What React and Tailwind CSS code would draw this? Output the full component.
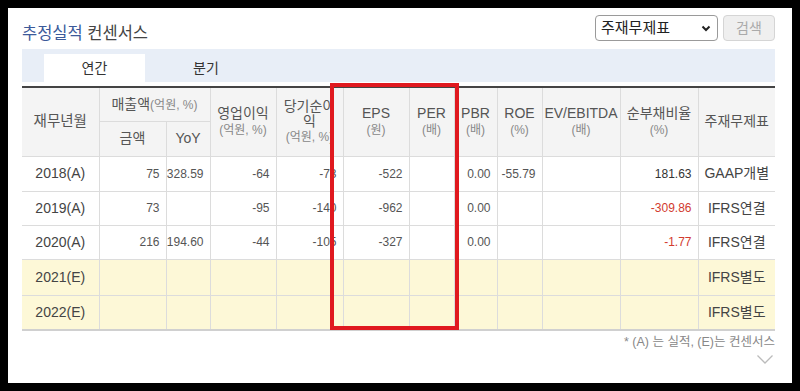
import React from 'react';

const font = { fontFamily: '"Liberation Sans", "Noto Sans CJK KR", sans-serif' };

const rows = [
  { year: '2018(A)', est: false, amt: '75', yoy: '328.59', op: '-64', net: '-73', eps: '-522', per: '', pbr: '0.00', roe: '-55.79', ev: '', debt: '181.63', neg: false, fs: 'GAAP개별' },
  { year: '2019(A)', est: false, amt: '73', yoy: '', op: '-95', net: '-140', eps: '-962', per: '', pbr: '0.00', roe: '', ev: '', debt: '-309.86', neg: true, fs: 'IFRS연결' },
  { year: '2020(A)', est: false, amt: '216', yoy: '194.60', op: '-44', net: '-105', eps: '-327', per: '', pbr: '0.00', roe: '', ev: '', debt: '-1.77', neg: true, fs: 'IFRS연결' },
  { year: '2021(E)', est: true, amt: '', yoy: '', op: '', net: '', eps: '', per: '', pbr: '', roe: '', ev: '', debt: '', neg: false, fs: 'IFRS별도' },
  { year: '2022(E)', est: true, amt: '', yoy: '', op: '', net: '', eps: '', per: '', pbr: '', roe: '', ev: '', debt: '', neg: false, fs: 'IFRS별도' },
];

const widths = [77, 67, 44, 66, 67, 66, 45, 43, 45, 78, 78, 77];

// header cell with a unit line underneath
const HeadCell = ({ title, unit, last }) => (
  <th
    rowSpan={2}
    className={`font-normal border-b border-[#dcdcdc] ${last ? '' : 'border-r'} bg-[#f4f4f4] align-middle text-center`}
  >
    <div className="text-[14px] leading-[17px] text-[#555]">{title}</div>
    {unit && <div className="text-[12px] leading-[16px] text-[#888]">{unit}</div>}
  </th>
);

const num = 'border-r border-b border-[#dcdcdc] text-right pr-[6px] text-[12px] text-[#555]';

export default function App() {
  return (
    <div className="w-[800px] h-[391px] bg-black pt-[8px] pl-[8px]" style={font}>
      <div className="w-[784px] h-[375px] bg-white pl-[14px] pr-[17px] pt-[7px]">
        <div className="relative">
          {/* title + selector */}
          <div className="flex items-start justify-between h-[26px]">
            <div className="mt-[7px] text-[16.5px] leading-[22px]">
              <span className="text-[#3c5a9a]">추정실적</span>{' '}
              <span className="text-[#444]">컨센서스</span>
            </div>
            <div className="flex">
              <div className="w-[123px] h-[26px] border border-[#9a9a9a] rounded-[4px] flex items-center justify-between pl-[5px] pr-[6px] text-[15px] text-[#222]">
                <span>주재무제표</span>
                <svg width="10" height="7" viewBox="0 0 10 7">
                  <polyline points="1.5,1.5 5,5 8.5,1.5" fill="none" stroke="#222" strokeWidth="2" />
                </svg>
              </div>
              <div className="w-[52px] h-[26px] ml-[5px] border border-[#d5d5d5] rounded-[4px] bg-[#efefef] flex items-center justify-center text-[14px] text-[#aaa]">
                검색
              </div>
            </div>
          </div>

          {/* tabs */}
          <div className="mt-[8px] h-[33px] bg-[#e8eef7] pl-[22px] pt-[5px] flex">
            <div className="w-[101px] h-[28px] bg-white flex items-center justify-center text-[14px] text-[#333]">연간</div>
            <div className="w-[122px] h-[28px] flex items-center justify-center text-[14px] text-[#333]">분기</div>
          </div>

          {/* table */}
          <table className="mt-[4px] w-full table-fixed border-collapse border-t-2 border-t-[#444] border-b-2 border-b-[#d0d0d0]">
            <colgroup>
              {widths.map((w, i) => (
                <col key={i} style={{ width: w }} />
              ))}
            </colgroup>
            <thead>
              <tr className="h-[34px]">
                <th rowSpan={2} className="font-normal border-r border-b border-[#dcdcdc] bg-[#f4f4f4] text-[14.5px] text-[#555]">
                  재무년월
                </th>
                <th colSpan={2} className="font-normal border-r border-b border-[#dcdcdc] bg-[#f4f4f4] text-[14px] text-[#555]">
                  매출액<span className="text-[12px] text-[#888]">(억원, %)</span>
                </th>
                <HeadCell title="영업이익" unit="(억원, %)" />
                <th rowSpan={2} className="font-normal border-r border-b border-[#dcdcdc] bg-[#f4f4f4] text-center">
                  <div className="text-[14px] leading-[15px] text-[#555]">
                    당기순이
                    <br />익
                  </div>
                  <div className="text-[12px] leading-[16px] text-[#888]">(억원, %)</div>
                </th>
                <HeadCell title="EPS" unit="(원)" />
                <HeadCell title="PER" unit="(배)" />
                <HeadCell title="PBR" unit="(배)" />
                <HeadCell title="ROE" unit="(%)" />
                <HeadCell title="EV/EBITDA" unit="(배)" />
                <HeadCell title="순부채비율" unit="(%)" />
                <HeadCell title="주재무제표" last />
              </tr>
              <tr className="h-[35px]">
                <th className="font-normal border-r border-b border-[#dcdcdc] bg-[#f4f4f4] text-[14px] text-[#555]">금액</th>
                <th className="font-normal border-r border-b border-[#dcdcdc] bg-[#f4f4f4] text-[14px] text-[#555]">YoY</th>
              </tr>
            </thead>
            <tbody>
              {rows.map((r, i) => (
                <tr key={r.year} className={`${i === 3 ? 'h-[36px]' : i === 0 || i === 4 ? 'h-[35px]' : 'h-[34px]'} ${r.est ? 'bg-[#fdf8d7]' : 'bg-white'}`}>
                  <td className="border-r border-b border-[#dcdcdc] text-center text-[14px] text-[#444]">{r.year}</td>
                  <td className={num}>{r.amt}</td>
                  <td className={num}>{r.yoy}</td>
                  <td className={num}>{r.op}</td>
                  <td className={num}>{r.net}</td>
                  <td className={num}>{r.eps}</td>
                  <td className={num}>{r.per}</td>
                  <td className={num}>{r.pbr}</td>
                  <td className={num}>{r.roe}</td>
                  <td className={num}>{r.ev}</td>
                  <td className={`border-r border-b border-[#dcdcdc] text-right pr-[6px] text-[12px] ${r.neg ? 'text-[#d23b2f]' : 'text-[#333]'}`}>
                    {r.debt}
                  </td>
                  <td className="border-b border-[#dcdcdc] text-center text-[14px] text-[#444]">{r.fs}</td>
                </tr>
              ))}
            </tbody>
          </table>

          <div className="mt-[3px] text-right text-[12.5px] leading-[16px] text-[#888]">* (A) 는 실적, (E)는 컨센서스</div>
          <div className="flex justify-end pr-[2px] mt-[5px]">
            <svg width="16" height="9" viewBox="0 0 16 9">
              <polyline points="0.5,0.5 8,8 15.5,0.5" fill="none" stroke="#bbb" strokeWidth="1.3" />
            </svg>
          </div>

          {/* highlight box over EPS / PER */}
          <div className="absolute left-[308px] top-[68px] w-[129px] h-[247px] border-4 border-[#e0191f] pointer-events-none" />
        </div>
      </div>
    </div>
  );
}
